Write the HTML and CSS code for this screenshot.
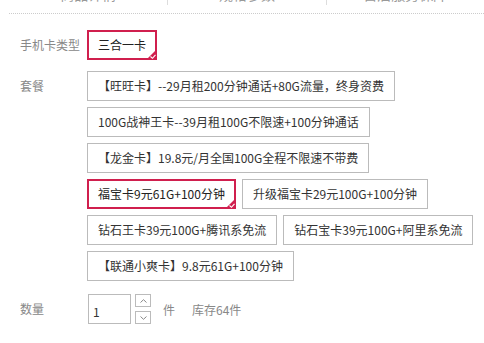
FILE: index.html
```
<!DOCTYPE html>
<html lang="zh-CN">
<head>
<meta charset="UTF-8">
<meta name="viewport" content="width=device-width, initial-scale=1.0">
<title>选择套餐</title>
<link rel="stylesheet" href="styles.css">
</head>
<body>

<div class="tabs">
    <div class="tab"><span>商品详情</span></div>
    <div class="tab"><span>规格参数</span></div>
    <div class="tab"><span>售后服务保障</span></div>
</div>

<div class="row first">
    <div class="label">手机卡类型</div>
    <div class="options">
        <div class="option selected">三合一卡<span class="tick"><svg width="11" height="11" viewBox="0 0 11 11"><path d="M11 0 L11 11 L0 11 Z" fill="#d01f4e"/><polyline points="4.5,7.5 6.5,9.3 9.5,5.8" fill="none" stroke="#fff" stroke-width="1.1"/></svg></span></div>
    </div>
</div>

<div class="row">
    <div class="label">套餐</div>
    <div class="options">
        <div class="option">【旺旺卡】--29月租200分钟通话+80G流量，终身资费</div>
        <div class="option">100G战神王卡--39月租100G不限速+100分钟通话</div>
        <div class="option">【龙金卡】19.8元/月全国100G全程不限速不带费</div>
        <div class="option selected">福宝卡9元61G+100分钟<span class="tick"><svg width="11" height="11" viewBox="0 0 11 11"><path d="M11 0 L11 11 L0 11 Z" fill="#d01f4e"/><polyline points="4.5,7.5 6.5,9.3 9.5,5.8" fill="none" stroke="#fff" stroke-width="1.1"/></svg></span></div>
        <div class="option">升级福宝卡29元100G+100分钟</div>
        <div class="option">钻石王卡39元100G+腾讯系免流</div>
        <div class="option">钻石宝卡39元100G+阿里系免流</div>
        <div class="option">【联通小爽卡】9.8元61G+100分钟</div>
    </div>
</div>

<div class="row amount">
    <div class="label">数量</div>
    <input class="qty" type="text" value="1">
    <div class="spin">
        <button type="button"><svg width="7" height="4" viewBox="0 0 7 4"><polyline points="0.5,3.5 3.5,0.7 6.5,3.5" fill="none" stroke="#888" stroke-width="1"/></svg></button>
        <button type="button"><svg width="7" height="4" viewBox="0 0 7 4"><polyline points="0.5,0.5 3.5,3.3 6.5,0.5" fill="none" stroke="#888" stroke-width="1"/></svg></button>
    </div>
    <span class="unit">件</span>
    <span class="stock">库存64件</span>
</div>

</body>
</html>
```

FILE: styles.css
```
body {
    margin: 0;
    padding: 0;
    background-color: #fff;
    font-family: "Noto Sans CJK SC", "Liberation Sans", sans-serif;
    font-size: 12px;
    color: #333;
    overflow-x: hidden;
}

.tabs {
    display: flex;
    height: 13px;
    margin-left: 9px;
    border-bottom: 1px dotted #ccc;
}

.tab {
    width: 170px;
    height: 5px;
    display: flex;
    justify-content: center;
}

.tab:first-child {
    width: 171px;
}

.tab + .tab {
    border-left: 1px solid #ddd;
}

.tab span {
    margin-top: -13px;
    font-size: 14px;
    line-height: 14px;
    color: #999;
}

.row {
    display: flex;
    padding-left: 20px;
    margin-top: 11px;
}

.row.first {
    margin-top: 16px;
}

.label {
    width: 67px;
    flex-shrink: 0;
    line-height: 30px;
    color: #888;
}

.options {
    flex: 1;
    display: flex;
    flex-wrap: wrap;
    gap: 6px;
    padding-right: 4px;
}

.option {
    position: relative;
    height: 28px;
    line-height: 28px;
    padding: 0 10px;
    border: 1px solid #bbb;
    white-space: nowrap;
    cursor: pointer;
}

.option.selected {
    height: 26px;
    line-height: 26px;
    padding: 0 9px;
    border: 2px solid #d01f4e;
    color: #222;
}

.tick {
    position: absolute;
    right: -2px;
    bottom: -2px;
    width: 11px;
    height: 11px;
}

.tick svg {
    display: block;
}

.amount {
    margin-top: 13px;
    align-items: center;
}

.amount .label {
    width: 68px;
}

.qty {
    width: 37px;
    height: 24px;
    padding: 4px 0 0 4px;
    margin: 0;
    border: 1px solid #bbb;
    font-family: inherit;
    font-size: 12px;
    color: #333;
    outline: none;
}

.spin {
    display: flex;
    flex-direction: column;
    gap: 4px;
    margin-left: 4px;
}

.spin button {
    width: 16px;
    height: 13px;
    padding: 0;
    border: 1px solid #bbb;
    background-color: #fff;
    display: flex;
    align-items: center;
    justify-content: center;
    cursor: pointer;
}

.unit {
    margin-left: 12px;
    color: #888;
}

.stock {
    margin-left: 17px;
    color: #888;
}
```
